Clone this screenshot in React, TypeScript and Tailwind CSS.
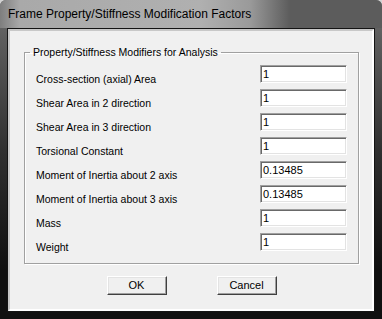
const rows = [
  { label: 'Cross-section (axial) Area', value: '1' },
  { label: 'Shear Area in 2 direction', value: '1' },
  { label: 'Shear Area in 3 direction', value: '1' },
  { label: 'Torsional Constant', value: '1' },
  { label: 'Moment of Inertia about 2 axis', value: '0.13485' },
  { label: 'Moment of Inertia about 3 axis', value: '0.13485' },
  { label: 'Mass', value: '1' },
  { label: 'Weight', value: '1' },
];

function Button({ children }: { children: string }) {
  return (
    <button
      type="button"
      className="w-[60px] h-[19px] bg-[#f0f0f0] text-[11px] leading-[15px] text-black border border-t-white border-l-white border-r-[#404040] border-b-[#404040] shadow-[inset_-1px_-1px_0_#a0a0a0,inset_1px_1px_0_#e3e3e3]"
    >
      {children}
    </button>
  );
}

export default function App() {
  return (
    <div className="w-[382px] h-[319px] bg-[linear-gradient(to_bottom,#d4d4d4,#101010)] font-['Liberation_Sans',Arial,sans-serif]">
      <div className="h-full flex flex-col rounded-t-[6px] bg-[linear-gradient(to_bottom,#6e6e6e_0px,#5c5c5c_40px,#303030_150px,#101010_270px)] px-[7px] pb-[7px]">
        {/* title bar */}
        <div className="h-[28px] -mx-[7px] px-[8px] flex items-center rounded-t-[6px] bg-[linear-gradient(to_right,#7e7e7e_0px,#a9a9a9_20px,#b0b0b0_200px,#9a9a9a_250px,#5c5c5c_290px)]">
          <span className="text-[12px] leading-[14px] text-black">
            Frame Property/Stiffness Modification Factors
          </span>
        </div>

        {/* client area */}
        <div className="flex-1 border border-[#141414]">
          <div className="h-full border-2 border-t-[#c8c8c8] border-l-[#c8c8c8] border-r-[#ffffff] border-b-[#ffffff] bg-[#f0f0f0] pt-[14px] pl-[14px] pr-[13px]">
            <fieldset className="border border-[#a0a0a0] shadow-[inset_1px_1px_0_#fff,1px_1px_0_#fff] pt-[6px] pb-[6px]">
              <legend className="ml-[5px] px-[3px] text-[10.5px] leading-[14px] text-black">
                Property/Stiffness Modifiers for Analysis
              </legend>
              {rows.map((r, i) => (
                <div key={i} className="h-[24px] flex items-start">
                  <span className="w-[235px] pl-[11px] pt-[8px] text-[10.5px] leading-[13px] text-black">
                    {r.label}
                  </span>
                  <div className="w-[87px] h-[18px] bg-white border border-t-[#a0a0a0] border-l-[#a0a0a0] border-r-white border-b-white shadow-[inset_1px_1px_0_#696969,inset_-1px_-1px_0_#e3e3e3] pl-[2px] text-[11px] leading-[16px] text-black">
                    {r.value}
                  </div>
                </div>
              ))}
            </fieldset>

            <div className="mt-[12px] flex justify-center gap-[50px]">
              <Button>OK</Button>
              <Button>Cancel</Button>
            </div>
          </div>
        </div>
      </div>
    </div>
  );
}
